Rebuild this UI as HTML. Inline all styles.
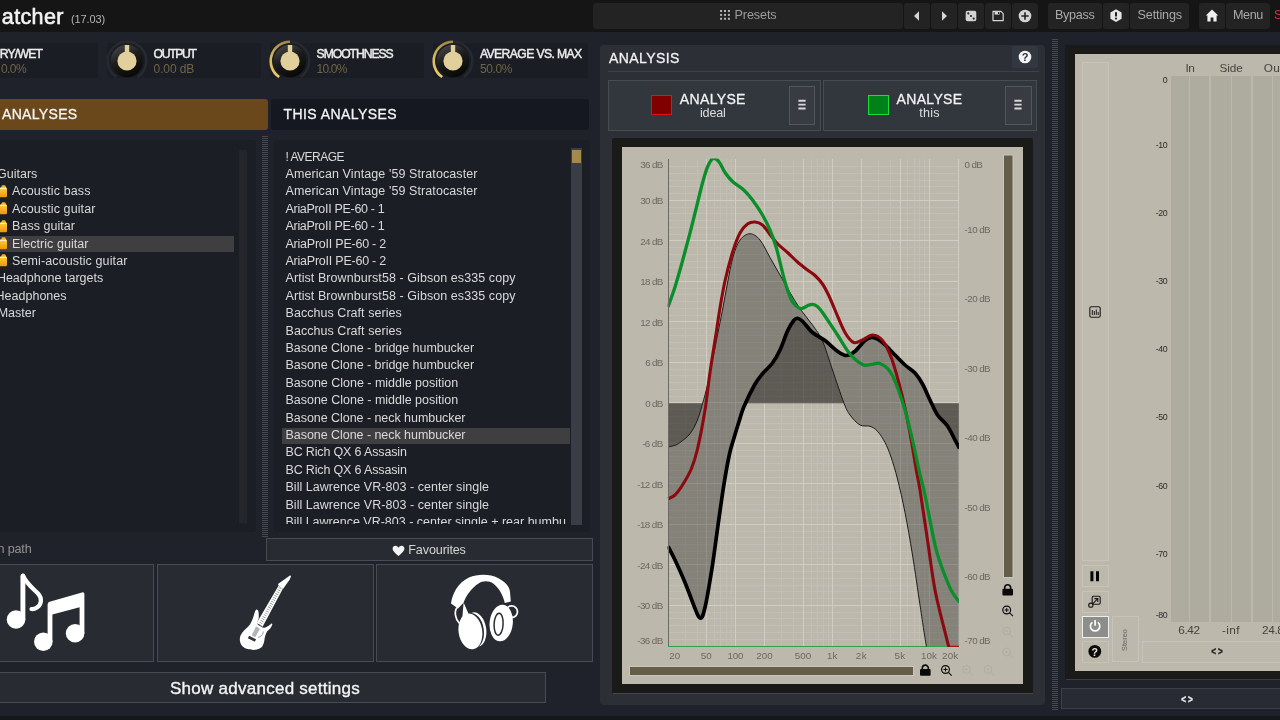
<!DOCTYPE html>
<html lang="en"><head><meta charset="utf-8"><title>MMatcher</title>
<style>
html,body{margin:0;padding:0;background:#1f222a;}
body{font-family:"Liberation Sans", sans-serif;}
#root{will-change:transform;position:relative;width:1280px;height:720px;overflow:hidden;background:#1f222a;}
#root div,#root span.t,#root svg{position:absolute;}
.t{white-space:pre;display:block;}
.b{box-sizing:border-box;}
</style></head><body><div id="root">
<div style="left:0;top:0;width:1280px;height:32px;background:#151515"></div><span class="t" style="left:1.80px;top:2.70px;font-size:21.5px;line-height:28px;color:#f4f4f4;letter-spacing:0.372px;-webkit-text-stroke:0.6px #f4f4f4;">atcher</span><span class="t" style="left:71.00px;top:12.00px;font-size:11px;line-height:14px;color:#b4b4b4;letter-spacing:-0.123px;">(17.03)</span><div style="left:593px;top:3px;width:309.5px;height:26px;background:#232323;border-radius:3px"></div><svg style="left:719.6px;top:10.2px" width="11" height="11" viewBox="0 0 11 11"><rect x="0.1" y="0" width="2" height="2" fill="#b4b4b4"/><rect x="4" y="0" width="2" height="2" fill="#b4b4b4"/><rect x="7.9" y="0" width="2" height="2" fill="#b4b4b4"/><rect x="0.1" y="3.9" width="2" height="2" fill="#b4b4b4"/><rect x="4" y="3.9" width="2" height="2" fill="#b4b4b4"/><rect x="7.9" y="3.9" width="2" height="2" fill="#b4b4b4"/><rect x="0.1" y="7.8" width="2" height="2" fill="#b4b4b4"/><rect x="4" y="7.8" width="2" height="2" fill="#b4b4b4"/><rect x="7.9" y="7.8" width="2" height="2" fill="#b4b4b4"/></svg><span class="t" style="left:734.50px;top:7.00px;font-size:12.6px;line-height:16px;color:#9c9c9c;letter-spacing:-0.100px;">Presets</span><div style="left:904px;top:3px;width:26px;height:26px;background:#232323;border-radius:3px"></div><div style="left:931px;top:3px;width:26px;height:26px;background:#232323;border-radius:3px"></div><div style="left:958px;top:3px;width:26px;height:26px;background:#232323;border-radius:3px"></div><div style="left:985px;top:3px;width:26px;height:26px;background:#232323;border-radius:3px"></div><div style="left:1012px;top:3px;width:26px;height:26px;background:#232323;border-radius:3px"></div><svg style="left:904px;top:3px" width="134" height="26" viewBox="0 0 134 26"><path d="M15 8.3 L10 13 L15 17.7 Z" fill="#d4d4d4"/><path d="M38 8.3 L43 13 L38 17.7 Z" fill="#d4d4d4"/><rect x="61.7" y="7.7" width="10.6" height="10.6" rx="2" fill="#d4d4d4"/><circle cx="64.3" cy="10.4" r="1.1" fill="#232323"/><circle cx="67" cy="13" r="1.1" fill="#232323"/><circle cx="69.7" cy="15.6" r="1.1" fill="#232323"/><path d="M89 8.4 H97 L99.2 10.6 V17.6 H89 Z" fill="none" stroke="#d4d4d4" stroke-width="1.2" stroke-linejoin="round"/><rect x="90.6" y="8.6" width="5" height="3" fill="#d4d4d4"/><rect x="94" y="9" width="1" height="2" fill="#232323"/><circle cx="121" cy="13" r="6.3" fill="#d4d4d4"/><path d="M117.3 13 H124.7 M121 9.3 V16.7" stroke="#232323" stroke-width="1.6"/></svg><div style="left:1048px;top:3px;width:54px;height:26px;background:#232323;border-radius:3px"></div><div style="left:1103px;top:3px;width:26px;height:26px;background:#232323;border-radius:3px"></div><div style="left:1130px;top:3px;width:59px;height:26px;background:#232323;border-radius:3px"></div><div style="left:1199px;top:3px;width:26px;height:26px;background:#232323;border-radius:3px"></div><div style="left:1226px;top:3px;width:43.5px;height:26px;background:#232323;border-radius:3px"></div><span class="t" style="left:1055.00px;top:7.00px;font-size:12.6px;line-height:16px;color:#a9a9a9;letter-spacing:-0.302px;">Bypass</span><span class="t" style="left:1137.50px;top:7.00px;font-size:12.6px;line-height:16px;color:#a9a9a9;letter-spacing:-0.127px;">Settings</span><span class="t" style="left:1233.00px;top:7.00px;font-size:12.6px;line-height:16px;color:#a9a9a9;letter-spacing:-0.379px;">Menu</span><span class="t" style="left:1274.00px;top:7.00px;font-size:12.6px;line-height:16px;color:#c23a3a;">S</span><svg style="left:1103px;top:3px" width="26" height="26" viewBox="0 0 26 26"><path d="M13 6.2 L18.6 9.4 V15.8 L13 19 L7.4 15.8 V9.4 Z" fill="#e6e6e6"/><rect x="12" y="9" width="2" height="4.6" rx="0.6" fill="#232323"/><circle cx="13" cy="15.6" r="1.1" fill="#232323"/></svg><svg style="left:1199px;top:3px" width="26" height="26" viewBox="0 0 26 26"><path d="M13 6.6 L19.2 12.6 H17.6 V18.4 H14.4 V14.4 H11.6 V18.4 H8.4 V12.6 H6.8 Z" fill="#efefef"/></svg><div style="left:-56px;top:42.5px;width:153.5px;height:35px;background:#1b1d24;border-radius:2px"></div><span class="t" style="left:-0.30px;top:45.60px;font-size:12.2px;line-height:16px;color:#ececec;letter-spacing:-0.781px;-webkit-text-stroke:0.45px #ececec;">RY/WET</span><span class="t" style="left:1.00px;top:60.60px;font-size:12px;line-height:16px;color:#6f6446;letter-spacing:-0.590px;">0.0%</span><div style="left:107px;top:42.5px;width:154px;height:35px;background:#1b1d24;border-radius:2px"></div><svg style="left:103.8px;top:38.4px" width="46" height="46" viewBox="-23 -23 46 46"><defs><linearGradient id="kg126" x1="0.2" y1="0" x2="0.7" y2="1"><stop offset="0" stop-color="#484848"/><stop offset="0.45" stop-color="#1c1c1c"/><stop offset="1" stop-color="#070707"/></linearGradient></defs><path d="M-10.79 16.00 A19.3 19.3 0 1 1 10.79 16.00" fill="none" stroke="#272a32" stroke-width="2.4"/><circle r="16.2" fill="url(#kg126)"/><rect x="-2.2" y="-16" width="4.4" height="12" fill="#e1d09c"/><circle r="9.6" fill="#e1d09c"/></svg><span class="t" style="left:153.60px;top:45.60px;font-size:12.2px;line-height:16px;color:#ececec;letter-spacing:-1.352px;-webkit-text-stroke:0.45px #ececec;">OUTPUT</span><span class="t" style="left:153.60px;top:60.60px;font-size:12px;line-height:16px;color:#6f6446;letter-spacing:-0.125px;">0.00 dB</span><div style="left:270px;top:42.5px;width:154px;height:35px;background:#1b1d24;border-radius:2px"></div><svg style="left:266.8px;top:38.4px" width="46" height="46" viewBox="-23 -23 46 46"><defs><linearGradient id="kg289" x1="0.2" y1="0" x2="0.7" y2="1"><stop offset="0" stop-color="#484848"/><stop offset="0.45" stop-color="#1c1c1c"/><stop offset="1" stop-color="#070707"/></linearGradient></defs><path d="M-10.79 16.00 A19.3 19.3 0 1 1 10.79 16.00" fill="none" stroke="#272a32" stroke-width="2.4"/><defs><linearGradient id="ag289" x1="0" y1="1" x2="0" y2="0"><stop offset="0" stop-color="#ebcd6c"/><stop offset="0.6" stop-color="#d6b75d"/><stop offset="1" stop-color="#a08848"/></linearGradient></defs><path d="M-10.79 16.00 A19.3 19.3 0 0 1 0.00 -19.30" fill="none" stroke="url(#ag289)" stroke-width="2.6"/><circle r="16.2" fill="url(#kg289)"/><rect x="-2.2" y="-16" width="4.4" height="12" fill="#e1d09c"/><circle r="9.6" fill="#e1d09c"/></svg><span class="t" style="left:316.60px;top:45.60px;font-size:12.2px;line-height:16px;color:#ececec;letter-spacing:-1.069px;-webkit-text-stroke:0.45px #ececec;">SMOOTHNESS</span><span class="t" style="left:316.60px;top:60.60px;font-size:12px;line-height:16px;color:#6f6446;letter-spacing:-0.806px;">10.0%</span><div style="left:433px;top:42.5px;width:155px;height:35px;background:#1b1d24;border-radius:2px"></div><svg style="left:430.4px;top:38.4px" width="46" height="46" viewBox="-23 -23 46 46"><defs><linearGradient id="kg453" x1="0.2" y1="0" x2="0.7" y2="1"><stop offset="0" stop-color="#484848"/><stop offset="0.45" stop-color="#1c1c1c"/><stop offset="1" stop-color="#070707"/></linearGradient></defs><path d="M-10.79 16.00 A19.3 19.3 0 1 1 10.79 16.00" fill="none" stroke="#272a32" stroke-width="2.4"/><defs><linearGradient id="ag453" x1="0" y1="1" x2="0" y2="0"><stop offset="0" stop-color="#ebcd6c"/><stop offset="0.6" stop-color="#d6b75d"/><stop offset="1" stop-color="#a08848"/></linearGradient></defs><path d="M-10.79 16.00 A19.3 19.3 0 0 1 0.00 -19.30" fill="none" stroke="url(#ag453)" stroke-width="2.6"/><circle r="16.2" fill="url(#kg453)"/><rect x="-2.2" y="-16" width="4.4" height="12" fill="#e1d09c"/><circle r="9.6" fill="#e1d09c"/></svg><span class="t" style="left:480.00px;top:45.60px;font-size:12.2px;line-height:16px;color:#ececec;letter-spacing:-0.624px;-webkit-text-stroke:0.45px #ececec;">AVERAGE VS. MAX</span><span class="t" style="left:480.00px;top:60.60px;font-size:12px;line-height:16px;color:#6f6446;letter-spacing:-0.406px;">50.0%</span><div style="left:-10px;top:98.5px;width:278px;height:31px;background:#6a481c;border-radius:3px"></div><span class="t" style="left:2.00px;top:104.60px;font-size:14px;line-height:18px;color:#f4f4f4;letter-spacing:0.326px;-webkit-text-stroke:0.3px #f4f4f4;">ANALYSES</span><div style="left:271px;top:99px;width:317.5px;height:30.5px;background:#151820;border-radius:3px"></div><span class="t" style="left:283.50px;top:104.60px;font-size:14px;line-height:18px;color:#f4f4f4;letter-spacing:0.430px;-webkit-text-stroke:0.3px #f4f4f4;">THIS ANALYSES</span><div style="left:-10px;top:140px;width:266px;height:392px;background:#1b1e25;border-radius:4px"></div><div style="left:273px;top:140px;width:317px;height:392px;background:#1b1e25;border-radius:4px"></div><div style="left:262px;top:136px;width:6px;height:401px;background:repeating-linear-gradient(to bottom,#464a53 0,#464a53 1px,#1d2026 1px,#1d2026 2px)"></div><div style="left:239px;top:150px;width:8px;height:373px;background:#24262b"></div><div style="left:571px;top:148px;width:11px;height:377px;background:#3a3d46"></div><div style="left:572px;top:149.5px;width:9px;height:13px;background:#a38a4c"></div><div style="left:-5px;top:236px;width:239px;height:15.5px;background:#3f3f42"></div><div style="left:282px;top:428px;width:288px;height:15.5px;background:#3f3f42"></div><span class="t" style="left:-3.00px;top:165.90px;font-size:12.5px;line-height:16px;color:#d9d9d9;">Guitars</span><span class="t" style="left:12.00px;top:183.30px;font-size:12.5px;line-height:16px;color:#d9d9d9;letter-spacing:0.106px;">Acoustic bass</span><svg style="left:-6.1px;top:184.7px" width="13" height="13" viewBox="0 0 13 13"><defs><linearGradient id="fg2" x1="0" y1="0" x2="0" y2="1"><stop offset="0" stop-color="#ffcf3f"/><stop offset="1" stop-color="#ef930c"/></linearGradient></defs><path d="M7 2.9 L7.6 0.9 Q7.8 0.2 8.6 0.2 H10.6 Q11.4 0.2 11.6 0.9 L12.2 2.9 Z" fill="#f5b324"/><rect x="0" y="2.6" width="13" height="9.7" rx="1.3" fill="url(#fg2)"/><path d="M0.6 3.4 H12.4" stroke="#fff6d8" stroke-width="0.9"/></svg><span class="t" style="left:12.00px;top:200.70px;font-size:12.5px;line-height:16px;color:#d9d9d9;letter-spacing:0.101px;">Acoustic guitar</span><svg style="left:-6.1px;top:202.1px" width="13" height="13" viewBox="0 0 13 13"><defs><linearGradient id="fg3" x1="0" y1="0" x2="0" y2="1"><stop offset="0" stop-color="#ffcf3f"/><stop offset="1" stop-color="#ef930c"/></linearGradient></defs><path d="M7 2.9 L7.6 0.9 Q7.8 0.2 8.6 0.2 H10.6 Q11.4 0.2 11.6 0.9 L12.2 2.9 Z" fill="#f5b324"/><rect x="0" y="2.6" width="13" height="9.7" rx="1.3" fill="url(#fg3)"/><path d="M0.6 3.4 H12.4" stroke="#fff6d8" stroke-width="0.9"/></svg><span class="t" style="left:12.00px;top:218.10px;font-size:12.5px;line-height:16px;color:#d9d9d9;letter-spacing:0.043px;">Bass guitar</span><svg style="left:-6.1px;top:219.5px" width="13" height="13" viewBox="0 0 13 13"><defs><linearGradient id="fg4" x1="0" y1="0" x2="0" y2="1"><stop offset="0" stop-color="#ffcf3f"/><stop offset="1" stop-color="#ef930c"/></linearGradient></defs><path d="M7 2.9 L7.6 0.9 Q7.8 0.2 8.6 0.2 H10.6 Q11.4 0.2 11.6 0.9 L12.2 2.9 Z" fill="#f5b324"/><rect x="0" y="2.6" width="13" height="9.7" rx="1.3" fill="url(#fg4)"/><path d="M0.6 3.4 H12.4" stroke="#fff6d8" stroke-width="0.9"/></svg><span class="t" style="left:12.00px;top:235.50px;font-size:12.5px;line-height:16px;color:#d9d9d9;letter-spacing:0.051px;">Electric guitar</span><svg style="left:-6.1px;top:236.9px" width="13" height="13" viewBox="0 0 13 13"><defs><linearGradient id="fg5" x1="0" y1="0" x2="0" y2="1"><stop offset="0" stop-color="#ffcf3f"/><stop offset="1" stop-color="#ef930c"/></linearGradient></defs><path d="M7 2.9 L7.6 0.9 Q7.8 0.2 8.6 0.2 H10.6 Q11.4 0.2 11.6 0.9 L12.2 2.9 Z" fill="#f5b324"/><rect x="0" y="2.6" width="13" height="9.7" rx="1.3" fill="url(#fg5)"/><path d="M0.6 3.4 H12.4" stroke="#fff6d8" stroke-width="0.9"/></svg><span class="t" style="left:12.00px;top:252.90px;font-size:12.5px;line-height:16px;color:#d9d9d9;letter-spacing:0.113px;">Semi-acoustic guitar</span><svg style="left:-6.1px;top:254.3px" width="13" height="13" viewBox="0 0 13 13"><defs><linearGradient id="fg6" x1="0" y1="0" x2="0" y2="1"><stop offset="0" stop-color="#ffcf3f"/><stop offset="1" stop-color="#ef930c"/></linearGradient></defs><path d="M7 2.9 L7.6 0.9 Q7.8 0.2 8.6 0.2 H10.6 Q11.4 0.2 11.6 0.9 L12.2 2.9 Z" fill="#f5b324"/><rect x="0" y="2.6" width="13" height="9.7" rx="1.3" fill="url(#fg6)"/><path d="M0.6 3.4 H12.4" stroke="#fff6d8" stroke-width="0.9"/></svg><span class="t" style="left:-3.14px;top:270.30px;font-size:12.5px;line-height:16px;color:#d9d9d9;">Headphone targets</span><span class="t" style="left:-4.41px;top:287.70px;font-size:12.5px;line-height:16px;color:#d9d9d9;">Headphones</span><span class="t" style="left:-2.30px;top:305.10px;font-size:12.5px;line-height:16px;color:#d9d9d9;">Master</span><div style="left:273px;top:140px;width:297px;height:384.2px;overflow:hidden"><span class="t" style="left:12.50px;top:8.50px;font-size:12px;line-height:16px;color:#d9d9d9;letter-spacing:-0.516px;">! AVERAGE</span><span class="t" style="left:12.50px;top:25.90px;font-size:12.5px;line-height:16px;color:#d9d9d9;letter-spacing:0.089px;">American Vintage '59 Stratocaster</span><span class="t" style="left:12.50px;top:43.30px;font-size:12.5px;line-height:16px;color:#d9d9d9;letter-spacing:0.089px;">American Vintage '59 Stratocaster</span><span class="t" style="left:12.50px;top:60.70px;font-size:12.5px;line-height:16px;color:#d9d9d9;letter-spacing:-0.311px;">AriaProII PE-60 - 1</span><span class="t" style="left:12.50px;top:78.10px;font-size:12.5px;line-height:16px;color:#d9d9d9;letter-spacing:-0.311px;">AriaProII PE-60 - 1</span><span class="t" style="left:12.50px;top:95.50px;font-size:12.5px;line-height:16px;color:#d9d9d9;letter-spacing:-0.232px;">AriaProII PE-60 - 2</span><span class="t" style="left:12.50px;top:112.90px;font-size:12.5px;line-height:16px;color:#d9d9d9;letter-spacing:-0.232px;">AriaProII PE-60 - 2</span><span class="t" style="left:12.50px;top:130.30px;font-size:12.5px;line-height:16px;color:#d9d9d9;letter-spacing:0.072px;">Artist Brownburst58 - Gibson es335 copy</span><span class="t" style="left:12.50px;top:147.70px;font-size:12.5px;line-height:16px;color:#d9d9d9;letter-spacing:0.072px;">Artist Brownburst58 - Gibson es335 copy</span><span class="t" style="left:12.50px;top:165.10px;font-size:12.5px;line-height:16px;color:#d9d9d9;letter-spacing:0.049px;">Bacchus Craft series</span><span class="t" style="left:12.50px;top:182.50px;font-size:12.5px;line-height:16px;color:#d9d9d9;letter-spacing:0.049px;">Bacchus Craft series</span><span class="t" style="left:12.50px;top:199.90px;font-size:12.5px;line-height:16px;color:#d9d9d9;letter-spacing:-0.036px;">Basone Clone - bridge humbucker</span><span class="t" style="left:12.50px;top:217.30px;font-size:12.5px;line-height:16px;color:#d9d9d9;letter-spacing:-0.036px;">Basone Clone - bridge humbucker</span><span class="t" style="left:12.50px;top:234.70px;font-size:12.5px;line-height:16px;color:#d9d9d9;letter-spacing:-0.014px;">Basone Clone - middle position</span><span class="t" style="left:12.50px;top:252.10px;font-size:12.5px;line-height:16px;color:#d9d9d9;letter-spacing:-0.014px;">Basone Clone - middle position</span><span class="t" style="left:12.50px;top:269.50px;font-size:12.5px;line-height:16px;color:#d9d9d9;letter-spacing:-0.047px;">Basone Clone - neck humbucker</span><span class="t" style="left:12.50px;top:286.90px;font-size:12.5px;line-height:16px;color:#d9d9d9;letter-spacing:-0.047px;">Basone Clone - neck humbucker</span><span class="t" style="left:12.50px;top:304.30px;font-size:12.5px;line-height:16px;color:#d9d9d9;letter-spacing:-0.158px;">BC Rich QX 6 Assasin</span><span class="t" style="left:12.50px;top:321.70px;font-size:12.5px;line-height:16px;color:#d9d9d9;letter-spacing:-0.158px;">BC Rich QX 6 Assasin</span><span class="t" style="left:12.50px;top:339.10px;font-size:12.5px;line-height:16px;color:#d9d9d9;letter-spacing:0.036px;">Bill Lawrence VR-803 - center single</span><span class="t" style="left:12.50px;top:356.50px;font-size:12.5px;line-height:16px;color:#d9d9d9;letter-spacing:0.036px;">Bill Lawrence VR-803 - center single</span><span class="t" style="left:12.50px;top:373.90px;font-size:12.5px;line-height:16px;color:#d9d9d9;">Bill Lawrence VR-803 - center single + rear humbu</span></div><span class="t" style="left:-2.50px;top:541.40px;font-size:12.6px;line-height:16px;color:#929292;letter-spacing:-0.169px;">n path</span><div class="b" style="left:266px;top:538px;width:327px;height:23px;background:#282b32;border:1px solid #484b52"></div><svg style="left:391.5px;top:544.5px" width="13" height="12" viewBox="0 0 13 12"><path d="M6.5 11 C2 7.4 0.6 5.6 0.6 3.6 C0.6 1.8 1.9 0.7 3.4 0.7 C4.8 0.7 5.9 1.5 6.5 2.8 C7.1 1.5 8.2 0.7 9.6 0.7 C11.1 0.7 12.4 1.8 12.4 3.6 C12.4 5.6 11 7.4 6.5 11 Z" fill="#f4f4f4"/></svg><span class="t" style="left:408.30px;top:542.00px;font-size:12.6px;line-height:16px;color:#d4d4d4;letter-spacing:-0.130px;">Favourites</span><div class="b" style="left:-10px;top:564px;width:164px;height:98px;background:#282b32;border:1px solid #484b52"></div><div class="b" style="left:157px;top:564px;width:216.5px;height:98px;background:#282b32;border:1px solid #484b52"></div><div class="b" style="left:376px;top:564px;width:217px;height:98px;background:#282b32;border:1px solid #484b52"></div><svg style="left:0;top:564px" width="154" height="98" viewBox="0 564 154 98"><ellipse cx="16" cy="619.5" rx="9.3" ry="9.2" fill="#ffffff"/><path d="M22.9 619.5 V576.2" stroke="#ffffff" stroke-width="4.9" stroke-linecap="round" fill="none"/><path d="M23 575.6 C26 583 33 588.5 38 593.5 C42.5 598.5 41.5 604.5 37 607.5 C35 608.8 33 609.2 31.5 609" stroke="#ffffff" stroke-width="4.2" stroke-linecap="round" fill="none"/><ellipse cx="43.3" cy="641.8" rx="9.3" ry="9.2" fill="#ffffff"/><ellipse cx="75.1" cy="633.2" rx="9.3" ry="9.2" fill="#ffffff"/><path d="M47.6 641.8 V604.5 Q47.6 602.4 49.6 601.8 L82 592.4 Q84.4 591.8 84.4 594.2 V633.2 H79.6 V607.3 L52.4 614.4 V641.8 Z" fill="#ffffff"/></svg><svg style="left:225px;top:566px" width="80" height="94" viewBox="225 566 80 94"><path d="M256.72 609.47 C257.20 609.65 258.09 609.97 258.42 611.43 C258.75 612.89 258.88 616.22 258.68 618.22 C258.49 620.22 256.94 622.09 257.25 623.44 C257.55 624.79 259.36 625.60 260.51 626.31 C261.66 627.03 262.79 627.86 264.16 627.75 C265.54 627.64 267.52 626.38 268.73 625.66 C269.95 624.94 270.89 623.59 271.48 623.44 C272.06 623.29 272.48 623.92 272.26 624.75 C272.04 625.57 271.04 627.27 270.17 628.40 C269.30 629.53 267.89 630.19 267.04 631.54 C266.19 632.88 265.62 634.58 265.08 636.50 C264.53 638.41 264.43 641.17 263.77 643.02 C263.12 644.87 262.58 646.46 261.16 647.59 C259.75 648.72 257.57 649.57 255.29 649.81 C253.00 650.05 249.67 649.72 247.45 649.03 C245.23 648.33 243.23 647.07 241.97 645.63 C240.71 644.20 240.10 642.15 239.88 640.41 C239.66 638.67 239.88 636.93 240.67 635.19 C241.45 633.45 243.06 631.71 244.58 629.97 C246.11 628.23 248.46 626.60 249.80 624.75 C251.15 622.90 251.89 620.83 252.68 618.87 C253.46 616.91 254.03 614.41 254.50 613.00 C254.98 611.58 255.18 610.97 255.55 610.39 C255.92 609.80 256.24 609.30 256.72 609.47 Z" fill="#ffffff"/><path d="M256.72 623.05 L262.60 626.84 L282.70 588.98 L278.52 585.84 Z" fill="#ffffff"/><path d="M259.8 625.2 L280.6 587.3" stroke="#5d5f66" stroke-width="3.3" stroke-dasharray="0.5 1.7" fill="none"/><path d="M278.00 584.02 L290.27 575.14 L290.93 576.44 L289.75 579.58 L282.96 588.98 L278.79 586.10 Z" fill="#ffffff"/><path d="M256.07 626.31 L259.99 628.66 L255.29 637.15 L251.63 635.19 Z" fill="#b4b5b9"/><path d="M249.15 635.84 L256.07 639.37 L254.77 641.72 L247.85 638.19 Z" fill="#33353b"/><path d="M263.4 631.5 C263 635 260.5 637 258 637.3" stroke="#5d5f66" stroke-width="0.6" fill="none"/></svg><svg style="left:440px;top:566px" width="90" height="94" viewBox="440 566 90 94"><path d="M451 603.6 C452 594 458 582.5 469 577.5 C478 573.8 490 574 498 578 C505 581.8 509.5 586 510 592 L510.8 601.5 L504.8 603 C503 595 499 588 493.5 583.8 C489 580.6 483 580.6 478.5 583.4 C471.5 588 466 595.5 463.5 602.8 L458 608.5 Z" fill="#ffffff"/><path d="M457.2 607.5 C454 611 455 619 459.5 623.5" stroke="#ffffff" stroke-width="1.7" fill="none"/><path d="M463.6 602.5 L470 617 L462 622 Z" fill="#ffffff"/><ellipse cx="475.6" cy="629.5" rx="10.6" ry="17.3" transform="rotate(-9 475.6 629.5)" fill="#ffffff"/><ellipse cx="472.6" cy="630.4" rx="11.2" ry="17.6" transform="rotate(-9 472.6 630.4)" fill="#2a2d34"/><ellipse cx="470.4" cy="631.4" rx="11.8" ry="18" transform="rotate(-9 470.4 631.4)" fill="#ffffff"/><circle cx="511.6" cy="611.8" r="5.9" fill="none" stroke="#ffffff" stroke-width="1.8"/><ellipse cx="501.2" cy="623" rx="11.6" ry="18.4" transform="rotate(6 501.2 623)" fill="#ffffff"/><ellipse cx="498.6" cy="624.2" rx="4.5" ry="11" transform="rotate(3 498.6 624.2)" fill="none" stroke="#2a2d34" stroke-width="1.5"/></svg><div class="b" style="left:-10px;top:672px;width:555.5px;height:30.5px;background:#282b32;border:1px solid #484b52"></div><span class="t" style="left:170.00px;top:677.60px;font-size:17px;line-height:22px;color:#f4f4f4;letter-spacing:0.259px;-webkit-text-stroke:0.35px #f4f4f4;">Show advanced settings</span><div style="left:0;top:715.5px;width:1280px;height:5px;background:#15171b"></div><div style="left:600px;top:45px;width:445px;height:660px;background:#2c2f36;border-radius:4px"></div><span class="t" style="left:609.00px;top:49.20px;font-size:14px;line-height:18px;color:#f2f2f2;letter-spacing:0.420px;-webkit-text-stroke:0.3px #f2f2f2;">ANALYSIS</span><div style="left:608px;top:71px;width:431px;height:1px;background:#3d4149"></div><div style="left:1012px;top:46px;width:26px;height:21.5px;background:#33373f;border-radius:2px"></div><svg style="left:1018px;top:50px" width="14" height="14" viewBox="0 0 14 14"><circle cx="7" cy="7" r="6.3" fill="#f4f4f4"/></svg><span class="t" style="left:1021.63px;top:50.20px;font-size:11px;line-height:14px;color:#2b2f37;font-weight:bold;">?</span><div class="b" style="left:607.5px;top:80px;width:213px;height:50.5px;background:#32363d;border:1px solid #474b53"></div><div class="b" style="left:651px;top:94.7px;width:20.8px;height:20.8px;background:#800000;border:1px solid #e01414"></div><span class="t" style="left:679.80px;top:89.60px;font-size:14px;line-height:18px;color:#f2f2f2;letter-spacing:0.350px;-webkit-text-stroke:0.3px #f2f2f2;">ANALYSE</span><span class="t" style="left:699.95px;top:105.30px;font-size:12.6px;line-height:16px;color:#dedede;letter-spacing:-0.182px;">ideal</span><div class="b" style="left:788.5px;top:86px;width:26.5px;height:38.5px;background:#383b42;border:1px solid #53565d"></div><svg style="left:797.9px;top:98.9px" width="9" height="11" viewBox="0 0 9 11"><path d="M0.4 1.7 H7.6 M0.4 5.6 H7.6 M0.4 9.5 H7.6" stroke="#d8d8d8" stroke-width="1.9"/></svg><div class="b" style="left:823px;top:80px;width:214px;height:50.5px;background:#32363d;border:1px solid #474b53"></div><div class="b" style="left:867.8px;top:94.7px;width:20.8px;height:20.8px;background:#008018;border:1px solid #14e03c"></div><span class="t" style="left:896.50px;top:89.60px;font-size:14px;line-height:18px;color:#f2f2f2;letter-spacing:0.350px;-webkit-text-stroke:0.3px #f2f2f2;">ANALYSE</span><span class="t" style="left:919.25px;top:105.30px;font-size:12.6px;line-height:16px;color:#dedede;letter-spacing:0.223px;">this</span><div class="b" style="left:1005px;top:86px;width:26.5px;height:38.5px;background:#383b42;border:1px solid #53565d"></div><svg style="left:1014.4px;top:98.9px" width="9" height="11" viewBox="0 0 9 11"><path d="M0.4 1.7 H7.6 M0.4 5.6 H7.6 M0.4 9.5 H7.6" stroke="#d8d8d8" stroke-width="1.9"/></svg><div style="left:612px;top:138px;width:420.5px;height:555.5px;background:#1a1a19;border-radius:2px"></div><div style="left:613px;top:693.2px;width:419.5px;height:1px;background:#44474e"></div><div style="left:622px;top:147px;width:401px;height:537px;background:#bdb8ac"></div><svg style="left:600px;top:130px" width="460" height="580" viewBox="600 130 460 580"><defs><clipPath id="pc"><rect x="667.5" y="158.6" width="291.4" height="488.5"/></clipPath></defs><path d="M668 639.50 H958.7M668 632.50 H958.7M668 625.50 H958.7M668 618.50 H958.7M668 612.50 H958.7M668 598.50 H958.7M668 591.50 H958.7M668 585.50 H958.7M668 578.50 H958.7M668 571.50 H958.7M668 558.50 H958.7M668 551.50 H958.7M668 544.50 H958.7M668 537.50 H958.7M668 531.50 H958.7M668 517.50 H958.7M668 510.50 H958.7M668 504.50 H958.7M668 497.50 H958.7M668 490.50 H958.7M668 477.50 H958.7M668 470.50 H958.7M668 463.50 H958.7M668 456.50 H958.7M668 450.50 H958.7M668 436.50 H958.7M668 429.50 H958.7M668 423.50 H958.7M668 416.50 H958.7M668 409.50 H958.7M668 396.50 H958.7M668 389.50 H958.7M668 382.50 H958.7M668 375.50 H958.7M668 369.50 H958.7M668 355.50 H958.7M668 348.50 H958.7M668 342.50 H958.7M668 335.50 H958.7M668 328.50 H958.7M668 315.50 H958.7M668 308.50 H958.7M668 301.50 H958.7M668 294.50 H958.7M668 288.50 H958.7M668 274.50 H958.7M668 267.50 H958.7M668 261.50 H958.7M668 254.50 H958.7M668 247.50 H958.7M668 234.50 H958.7M668 227.50 H958.7M668 220.50 H958.7M668 213.50 H958.7M668 207.50 H958.7M668 193.50 H958.7M668 186.50 H958.7M668 180.50 H958.7M668 173.50 H958.7M668 166.50 H958.7M685.5 159 V646M697.5 159 V646M714.5 159 V646M720.5 159 V646M726.5 159 V646M731.5 159 V646M781.5 159 V646M793.5 159 V646M811.5 159 V646M817.5 159 V646M823.5 159 V646M828.5 159 V646M878.5 159 V646M890.5 159 V646M907.5 159 V646M914.5 159 V646M919.5 159 V646M924.5 159 V646" stroke="#c3bfb4" stroke-width="1" fill="none"/><path d="M668 605.50 H958.7M668 564.50 H958.7M668 524.50 H958.7M668 483.50 H958.7M668 443.50 H958.7M668 402.50 H958.7M668 362.50 H958.7M668 321.50 H958.7M668 281.50 H958.7M668 240.50 H958.7M668 200.50 H958.7M668.5 159 V646M706.5 159 V646M735.5 159 V646M764.5 159 V646M803.5 159 V646M832.5 159 V646M861.5 159 V646M900.5 159 V646M929.5 159 V646M958.5 159 V646" stroke="#d0cdc3" stroke-width="1" fill="none"/><g clip-path="url(#pc)"><path d="M668.00 447.00 C669.17 446.72 673.00 446.05 675.00 445.30 C677.00 444.55 677.50 444.43 680.00 442.50 C682.50 440.57 687.08 437.50 690.00 433.75 C692.92 430.00 695.42 425.00 697.50 420.00 C699.58 415.00 700.83 409.58 702.50 403.75 C704.17 397.92 705.83 392.29 707.50 385.00 C709.17 377.71 710.83 368.33 712.50 360.00 C714.17 351.67 715.83 343.33 717.50 335.00 C719.17 326.67 720.83 318.67 722.50 310.00 C724.17 301.33 725.75 291.83 727.50 283.00 C729.25 274.17 730.92 264.17 733.00 257.00 C735.08 249.83 737.17 243.88 740.00 240.00 C742.83 236.12 746.67 233.75 750.00 233.75 C753.33 233.75 756.67 236.04 760.00 240.00 C763.33 243.96 766.67 251.67 770.00 257.50 C773.33 263.33 776.67 269.17 780.00 275.00 C783.33 280.83 786.67 286.88 790.00 292.50 C793.33 298.12 796.25 303.33 800.00 308.75 C803.75 314.17 808.75 319.62 812.50 325.00 C816.25 330.38 819.17 333.50 822.50 341.00 C825.83 348.50 828.96 359.75 832.50 370.00 C836.04 380.25 840.83 395.00 843.75 402.50 C846.67 410.00 847.29 411.25 850.00 415.00 C852.71 418.75 856.67 423.12 860.00 425.00 C863.33 426.88 867.08 425.21 870.00 426.25 C872.92 427.29 875.00 428.54 877.50 431.25 C880.00 433.96 882.75 438.21 885.00 442.50 C887.25 446.79 888.92 450.92 891.00 457.00 C893.08 463.08 895.17 469.75 897.50 479.00 C899.83 488.25 902.50 499.83 905.00 512.50 C907.50 525.17 910.00 539.58 912.50 555.00 C915.00 570.42 918.12 592.50 920.00 605.00 C921.88 617.50 922.68 623.08 923.75 630.00 C924.82 636.92 925.96 643.75 926.40 646.50 L926.4 700 L960 700 L960 403.30 L668 403.30 Z" fill="rgba(0,0,0,0.295)" fill-rule="evenodd"/><path d="M668.00 546.25 C669.17 548.54 672.17 553.96 675.00 560.00 C677.83 566.04 681.67 574.42 685.00 582.50 C688.33 590.58 692.83 603.00 695.00 608.50 C697.17 614.00 697.12 613.88 698.00 615.50 C698.88 617.12 699.53 618.12 700.30 618.20 C701.07 618.28 701.82 617.78 702.60 616.00 C703.38 614.22 704.18 611.00 705.00 607.50 C705.82 604.00 706.25 602.08 707.50 595.00 C708.75 587.92 710.62 577.50 712.50 565.00 C714.38 552.50 716.83 533.50 718.75 520.00 C720.67 506.50 722.21 495.00 724.00 484.00 C725.79 473.00 727.83 461.67 729.50 454.00 C731.17 446.33 732.33 443.67 734.00 438.00 C735.67 432.33 737.83 425.25 739.50 420.00 C741.17 414.75 741.50 412.33 744.00 406.50 C746.50 400.67 751.42 390.46 754.50 385.00 C757.58 379.54 759.50 377.42 762.50 373.75 C765.50 370.08 769.58 366.96 772.50 363.00 C775.42 359.04 777.50 355.33 780.00 350.00 C782.50 344.67 785.21 335.92 787.50 331.00 C789.79 326.08 792.08 322.62 793.75 320.50 C795.42 318.38 796.04 318.12 797.50 318.25 C798.96 318.38 800.00 318.88 802.50 321.25 C805.00 323.62 808.75 329.29 812.50 332.50 C816.25 335.71 820.83 337.38 825.00 340.50 C829.17 343.62 833.96 348.75 837.50 351.25 C841.04 353.75 843.33 355.50 846.25 355.50 C849.17 355.50 851.88 353.75 855.00 351.25 C858.12 348.75 862.08 342.79 865.00 340.50 C867.92 338.21 869.58 337.17 872.50 337.50 C875.42 337.83 878.75 339.58 882.50 342.50 C886.25 345.42 891.25 351.25 895.00 355.00 C898.75 358.75 901.67 362.00 905.00 365.00 C908.33 368.00 912.08 369.83 915.00 373.00 C917.92 376.17 920.00 379.50 922.50 384.00 C925.00 388.50 927.50 394.83 930.00 400.00 C932.50 405.17 934.58 410.67 937.50 415.00 C940.42 419.33 944.58 421.83 947.50 426.00 C950.42 430.17 953.00 436.25 955.00 440.00 C957.00 443.75 958.75 447.08 959.50 448.50 L959.50 403.30 L668.00 403.30 Z" fill="rgba(0,0,0,0.295)" fill-rule="evenodd"/><path d="M668 646.5 H949" stroke="#2f9f4b" stroke-width="1.1" fill="none"/><path d="M947.5 646.4 H960" stroke="#a0141a" stroke-width="1.3" fill="none"/><path d="M668.00 447.00 C669.17 446.72 673.00 446.05 675.00 445.30 C677.00 444.55 677.50 444.43 680.00 442.50 C682.50 440.57 687.08 437.50 690.00 433.75 C692.92 430.00 695.42 425.00 697.50 420.00 C699.58 415.00 700.83 409.58 702.50 403.75 C704.17 397.92 705.83 392.29 707.50 385.00 C709.17 377.71 710.83 368.33 712.50 360.00 C714.17 351.67 715.83 343.33 717.50 335.00 C719.17 326.67 720.83 318.67 722.50 310.00 C724.17 301.33 725.75 291.83 727.50 283.00 C729.25 274.17 730.92 264.17 733.00 257.00 C735.08 249.83 737.17 243.88 740.00 240.00 C742.83 236.12 746.67 233.75 750.00 233.75 C753.33 233.75 756.67 236.04 760.00 240.00 C763.33 243.96 766.67 251.67 770.00 257.50 C773.33 263.33 776.67 269.17 780.00 275.00 C783.33 280.83 786.67 286.88 790.00 292.50 C793.33 298.12 796.25 303.33 800.00 308.75 C803.75 314.17 808.75 319.62 812.50 325.00 C816.25 330.38 819.17 333.50 822.50 341.00 C825.83 348.50 828.96 359.75 832.50 370.00 C836.04 380.25 840.83 395.00 843.75 402.50 C846.67 410.00 847.29 411.25 850.00 415.00 C852.71 418.75 856.67 423.12 860.00 425.00 C863.33 426.88 867.08 425.21 870.00 426.25 C872.92 427.29 875.00 428.54 877.50 431.25 C880.00 433.96 882.75 438.21 885.00 442.50 C887.25 446.79 888.92 450.92 891.00 457.00 C893.08 463.08 895.17 469.75 897.50 479.00 C899.83 488.25 902.50 499.83 905.00 512.50 C907.50 525.17 910.00 539.58 912.50 555.00 C915.00 570.42 918.12 592.50 920.00 605.00 C921.88 617.50 922.68 623.08 923.75 630.00 C924.82 636.92 925.96 643.75 926.40 646.50" fill="none" stroke="#1c1c1c" stroke-width="1"/><path d="M668.00 546.25 C669.17 548.54 672.17 553.96 675.00 560.00 C677.83 566.04 681.67 574.42 685.00 582.50 C688.33 590.58 692.83 603.00 695.00 608.50 C697.17 614.00 697.12 613.88 698.00 615.50 C698.88 617.12 699.53 618.12 700.30 618.20 C701.07 618.28 701.82 617.78 702.60 616.00 C703.38 614.22 704.18 611.00 705.00 607.50 C705.82 604.00 706.25 602.08 707.50 595.00 C708.75 587.92 710.62 577.50 712.50 565.00 C714.38 552.50 716.83 533.50 718.75 520.00 C720.67 506.50 722.21 495.00 724.00 484.00 C725.79 473.00 727.83 461.67 729.50 454.00 C731.17 446.33 732.33 443.67 734.00 438.00 C735.67 432.33 737.83 425.25 739.50 420.00 C741.17 414.75 741.50 412.33 744.00 406.50 C746.50 400.67 751.42 390.46 754.50 385.00 C757.58 379.54 759.50 377.42 762.50 373.75 C765.50 370.08 769.58 366.96 772.50 363.00 C775.42 359.04 777.50 355.33 780.00 350.00 C782.50 344.67 785.21 335.92 787.50 331.00 C789.79 326.08 792.08 322.62 793.75 320.50 C795.42 318.38 796.04 318.12 797.50 318.25 C798.96 318.38 800.00 318.88 802.50 321.25 C805.00 323.62 808.75 329.29 812.50 332.50 C816.25 335.71 820.83 337.38 825.00 340.50 C829.17 343.62 833.96 348.75 837.50 351.25 C841.04 353.75 843.33 355.50 846.25 355.50 C849.17 355.50 851.88 353.75 855.00 351.25 C858.12 348.75 862.08 342.79 865.00 340.50 C867.92 338.21 869.58 337.17 872.50 337.50 C875.42 337.83 878.75 339.58 882.50 342.50 C886.25 345.42 891.25 351.25 895.00 355.00 C898.75 358.75 901.67 362.00 905.00 365.00 C908.33 368.00 912.08 369.83 915.00 373.00 C917.92 376.17 920.00 379.50 922.50 384.00 C925.00 388.50 927.50 394.83 930.00 400.00 C932.50 405.17 934.58 410.67 937.50 415.00 C940.42 419.33 944.58 421.83 947.50 426.00 C950.42 430.17 953.00 436.25 955.00 440.00 C957.00 443.75 958.75 447.08 959.50 448.50" fill="none" stroke="#000" stroke-width="3.7" stroke-linejoin="round"/><path d="M668.00 498.75 C669.17 498.12 672.58 497.29 675.00 495.00 C677.42 492.71 679.79 489.33 682.50 485.00 C685.21 480.67 688.75 475.00 691.25 469.00 C693.75 463.00 695.21 458.83 697.50 449.00 C699.79 439.17 702.92 422.75 705.00 410.00 C707.08 397.25 708.12 385.42 710.00 372.50 C711.88 359.58 714.58 343.25 716.25 332.50 C717.92 321.75 718.54 316.58 720.00 308.00 C721.46 299.42 722.92 290.25 725.00 281.00 C727.08 271.75 730.00 260.50 732.50 252.50 C735.00 244.50 737.50 237.75 740.00 233.00 C742.50 228.25 745.00 225.83 747.50 224.00 C750.00 222.17 752.50 221.83 755.00 222.00 C757.50 222.17 760.00 222.92 762.50 225.00 C765.00 227.08 767.50 231.38 770.00 234.50 C772.50 237.62 774.58 240.75 777.50 243.75 C780.42 246.75 784.17 249.46 787.50 252.50 C790.83 255.54 794.17 259.08 797.50 262.00 C800.83 264.92 804.58 267.75 807.50 270.00 C810.42 272.25 812.50 273.17 815.00 275.50 C817.50 277.83 820.21 280.67 822.50 284.00 C824.79 287.33 826.67 291.17 828.75 295.50 C830.83 299.83 832.29 303.83 835.00 310.00 C837.71 316.17 841.88 327.08 845.00 332.50 C848.12 337.92 850.83 341.25 853.75 342.50 C856.67 343.75 859.38 341.25 862.50 340.00 C865.62 338.75 869.17 334.92 872.50 335.00 C875.83 335.08 879.38 336.75 882.50 340.50 C885.62 344.25 888.54 350.50 891.25 357.50 C893.96 364.50 896.46 374.08 898.75 382.50 C901.04 390.92 902.92 398.42 905.00 408.00 C907.08 417.58 909.38 429.67 911.25 440.00 C913.12 450.33 914.79 461.67 916.25 470.00 C917.71 478.33 918.12 478.33 920.00 490.00 C921.88 501.67 925.00 523.33 927.50 540.00 C930.00 556.67 932.08 574.67 935.00 590.00 C937.92 605.33 942.77 622.75 945.00 632.00 C947.23 641.25 947.63 642.33 948.40 645.50 C949.17 648.67 949.40 650.08 949.60 651.00" fill="none" stroke="#8b0a0f" stroke-width="3.1" stroke-linejoin="round"/><path d="M668.00 307.00 C669.17 303.67 672.58 294.67 675.00 287.00 C677.42 279.33 680.00 270.00 682.50 261.00 C685.00 252.00 687.50 242.67 690.00 233.00 C692.50 223.33 695.42 211.33 697.50 203.00 C699.58 194.67 700.83 189.00 702.50 183.00 C704.17 177.00 705.75 171.08 707.50 167.00 C709.25 162.92 711.12 159.42 713.00 158.50 C714.88 157.58 716.75 159.17 718.75 161.50 C720.75 163.83 722.71 169.17 725.00 172.50 C727.29 175.83 729.38 178.58 732.50 181.50 C735.62 184.42 740.42 186.92 743.75 190.00 C747.08 193.08 749.38 195.83 752.50 200.00 C755.62 204.17 759.58 210.00 762.50 215.00 C765.42 220.00 767.71 224.58 770.00 230.00 C772.29 235.42 774.38 241.25 776.25 247.50 C778.12 253.75 779.58 261.08 781.25 267.50 C782.92 273.92 784.38 280.25 786.25 286.00 C788.12 291.75 790.21 298.25 792.50 302.00 C794.79 305.75 798.08 307.57 800.00 308.50 C801.92 309.43 802.58 308.13 804.00 307.60 C805.42 307.07 807.08 305.83 808.50 305.30 C809.92 304.77 811.08 304.25 812.50 304.40 C813.92 304.55 815.33 304.85 817.00 306.20 C818.67 307.55 819.08 307.70 822.50 312.50 C825.92 317.30 832.92 328.08 837.50 335.00 C842.08 341.92 845.83 349.08 850.00 354.00 C854.17 358.92 859.00 362.75 862.50 364.50 C866.00 366.25 868.08 364.67 871.00 364.50 C873.92 364.33 876.83 362.33 880.00 363.50 C883.17 364.67 887.08 367.50 890.00 371.50 C892.92 375.50 895.00 381.08 897.50 387.50 C900.00 393.92 902.50 401.25 905.00 410.00 C907.50 418.75 910.17 430.00 912.50 440.00 C914.83 450.00 916.92 460.83 919.00 470.00 C921.08 479.17 922.33 482.50 925.00 495.00 C927.67 507.50 932.33 533.33 935.00 545.00 C937.67 556.67 939.05 559.17 941.00 565.00 C942.95 570.83 944.98 575.75 946.70 580.00 C948.42 584.25 949.77 587.57 951.30 590.50 C952.83 593.43 954.45 595.60 955.90 597.60 C957.35 599.60 959.32 601.68 960.00 602.50" fill="none" stroke="#0a8e2a" stroke-width="3.3" stroke-linejoin="round"/></g><path d="M668.5 159 V646" stroke="#6b6a65" stroke-width="1"/><rect x="629.5" y="666.5" width="284" height="9" fill="#645d49" stroke="#cac6bb" stroke-width="1"/><rect x="1003.5" y="155" width="9.5" height="422.5" fill="#645d49" stroke="#cac6bb" stroke-width="1"/><rect x="920" y="669.1" width="10.6" height="6.6" rx="1" fill="#0a0a0a"/><path d="M922.3 669.5 V668.1 A3 3 0 0 1 928.3 668.1 V669.5" fill="none" stroke="#0a0a0a" stroke-width="1.6"/><circle cx="945.5" cy="669.5" r="3.9" fill="none" stroke="#0a0a0a" stroke-width="1.2"/><path d="M948.4 672.4 L951.7 675.7" stroke="#0a0a0a" stroke-width="1.1"/><path d="M943.5 669.5 H947.5" stroke="#0a0a0a" stroke-width="1"/><path d="M945.5 667.5 V671.5" stroke="#0a0a0a" stroke-width="1"/><circle cx="966.5" cy="669.5" r="3.9" fill="none" stroke="#b1ac9f" stroke-width="1"/><path d="M969.4 672.4 L972.7 675.7" stroke="#b1ac9f" stroke-width="0.9"/><path d="M964.5 669.5 H968.5" stroke="#b1ac9f" stroke-width="1"/><circle cx="988" cy="669.5" r="3.9" fill="none" stroke="#b1ac9f" stroke-width="1"/><path d="M990.9 672.4 L994.2 675.7" stroke="#b1ac9f" stroke-width="0.9"/><circle cx="988" cy="669.5" r="1" fill="#b1ac9f"/><rect x="1002.4" y="588.8" width="10.6" height="6.6" rx="1" fill="#0a0a0a"/><path d="M1004.7 589.2 V587.8 A3 3 0 0 1 1010.7 587.8 V589.2" fill="none" stroke="#0a0a0a" stroke-width="1.6"/><circle cx="1006.7" cy="610" r="3.9" fill="none" stroke="#0a0a0a" stroke-width="1.2"/><path d="M1009.6 612.9 L1012.9 616.2" stroke="#0a0a0a" stroke-width="1.1"/><path d="M1004.7 610 H1008.7" stroke="#0a0a0a" stroke-width="1"/><path d="M1006.7 608 V612" stroke="#0a0a0a" stroke-width="1"/><circle cx="1006.7" cy="631" r="3.9" fill="none" stroke="#b1ac9f" stroke-width="1"/><path d="M1009.6 633.9 L1012.9 637.2" stroke="#b1ac9f" stroke-width="0.9"/><path d="M1004.7 631 H1008.7" stroke="#b1ac9f" stroke-width="1"/><circle cx="1006.7" cy="652" r="3.9" fill="none" stroke="#b1ac9f" stroke-width="1"/><path d="M1009.6 654.9 L1012.9 658.2" stroke="#b1ac9f" stroke-width="0.9"/><circle cx="1006.7" cy="652" r="1" fill="#b1ac9f"/></svg><span class="t" style="left:640.20px;top:157.80px;font-size:9.8px;line-height:13px;color:#6b6861;letter-spacing:-0.622px;">36 dB</span><span class="t" style="left:640.20px;top:194.30px;font-size:9.8px;line-height:13px;color:#6b6861;letter-spacing:-0.622px;">30 dB</span><span class="t" style="left:640.20px;top:234.80px;font-size:9.8px;line-height:13px;color:#6b6861;letter-spacing:-0.622px;">24 dB</span><span class="t" style="left:640.20px;top:275.30px;font-size:9.8px;line-height:13px;color:#6b6861;letter-spacing:-0.622px;">18 dB</span><span class="t" style="left:640.20px;top:315.80px;font-size:9.8px;line-height:13px;color:#6b6861;letter-spacing:-0.622px;">12 dB</span><span class="t" style="left:645.20px;top:356.30px;font-size:9.8px;line-height:13px;color:#6b6861;letter-spacing:-0.664px;">6 dB</span><span class="t" style="left:645.20px;top:396.80px;font-size:9.8px;line-height:13px;color:#6b6861;letter-spacing:-0.664px;">0 dB</span><span class="t" style="left:642.20px;top:437.30px;font-size:9.8px;line-height:13px;color:#6b6861;letter-spacing:-0.584px;">-6 dB</span><span class="t" style="left:637.20px;top:477.80px;font-size:9.8px;line-height:13px;color:#6b6861;letter-spacing:-0.562px;">-12 dB</span><span class="t" style="left:637.20px;top:518.30px;font-size:9.8px;line-height:13px;color:#6b6861;letter-spacing:-0.562px;">-18 dB</span><span class="t" style="left:637.20px;top:558.80px;font-size:9.8px;line-height:13px;color:#6b6861;letter-spacing:-0.562px;">-24 dB</span><span class="t" style="left:637.20px;top:599.30px;font-size:9.8px;line-height:13px;color:#6b6861;letter-spacing:-0.562px;">-30 dB</span><span class="t" style="left:637.20px;top:634.10px;font-size:9.8px;line-height:13px;color:#6b6861;letter-spacing:-0.562px;">-36 dB</span><span class="t" style="left:964.60px;top:157.80px;font-size:9.8px;line-height:13px;color:#6b6861;letter-spacing:-0.664px;">0 dB</span><span class="t" style="left:964.60px;top:222.80px;font-size:9.8px;line-height:13px;color:#6b6861;letter-spacing:-0.562px;">-10 dB</span><span class="t" style="left:964.60px;top:292.30px;font-size:9.8px;line-height:13px;color:#6b6861;letter-spacing:-0.562px;">-20 dB</span><span class="t" style="left:964.60px;top:361.80px;font-size:9.8px;line-height:13px;color:#6b6861;letter-spacing:-0.562px;">-30 dB</span><span class="t" style="left:964.60px;top:431.30px;font-size:9.8px;line-height:13px;color:#6b6861;letter-spacing:-0.562px;">-40 dB</span><span class="t" style="left:964.60px;top:500.80px;font-size:9.8px;line-height:13px;color:#6b6861;letter-spacing:-0.562px;">-50 dB</span><span class="t" style="left:964.60px;top:570.30px;font-size:9.8px;line-height:13px;color:#6b6861;letter-spacing:-0.562px;">-60 dB</span><span class="t" style="left:964.60px;top:634.10px;font-size:9.8px;line-height:13px;color:#6b6861;letter-spacing:-0.562px;">-70 dB</span><span class="t" style="left:669.30px;top:648.80px;font-size:9.8px;line-height:13px;color:#6b6861;letter-spacing:-0.053px;">20</span><span class="t" style="left:700.83px;top:648.80px;font-size:9.8px;line-height:13px;color:#6b6861;letter-spacing:-0.053px;">50</span><span class="t" style="left:727.38px;top:648.80px;font-size:9.8px;line-height:13px;color:#6b6861;letter-spacing:-0.120px;">100</span><span class="t" style="left:756.28px;top:648.80px;font-size:9.8px;line-height:13px;color:#6b6861;letter-spacing:0.047px;">200</span><span class="t" style="left:794.81px;top:648.80px;font-size:9.8px;line-height:13px;color:#6b6861;letter-spacing:0.047px;">500</span><span class="t" style="left:826.96px;top:648.80px;font-size:9.8px;line-height:13px;color:#6b6861;letter-spacing:0.070px;">1k</span><span class="t" style="left:855.86px;top:648.80px;font-size:9.8px;line-height:13px;color:#6b6861;letter-spacing:0.320px;">2k</span><span class="t" style="left:894.39px;top:648.80px;font-size:9.8px;line-height:13px;color:#6b6861;letter-spacing:0.320px;">5k</span><span class="t" style="left:921.04px;top:648.80px;font-size:9.8px;line-height:13px;color:#6b6861;letter-spacing:0.068px;">10k</span><span class="t" style="left:942.00px;top:648.80px;font-size:9.8px;line-height:13px;color:#6b6861;letter-spacing:0.234px;">20k</span><div style="left:1052px;top:39px;width:6px;height:672px;background:repeating-linear-gradient(to bottom,#464a53 0,#464a53 1px,#1d2026 1px,#1d2026 2px)"></div><div style="left:1065px;top:45px;width:230px;height:634.5px;background:#1a1a19;border-radius:2px"></div><div style="left:1066px;top:679.3px;width:230px;height:1px;background:#3a3d44"></div><div style="left:1075px;top:54px;width:220px;height:616.5px;background:#bdb8ac"></div><div class="b" style="left:1082px;top:62px;width:27px;height:499px;background:#c0bbaf;border:1px solid #c7c3b8"></div><svg style="left:1088.5px;top:306px" width="12" height="12" viewBox="0 0 12 12"><rect x="0.8" y="0.8" width="10.4" height="10.4" rx="1.5" fill="none" stroke="#1c1c1c" stroke-width="1.1"/><path d="M3.3 4 V9 M5.3 5 V9 M7.3 3.5 V9 M9.2 6 V9" stroke="#1c1c1c" stroke-width="1"/></svg><div class="b" style="left:1082px;top:565px;width:27px;height:22px;background:#bdb8ac;border:1px solid #c7c3b8"></div><div class="b" style="left:1082px;top:590.5px;width:27px;height:22px;background:#bdb8ac;border:1px solid #c7c3b8"></div><div class="b" style="left:1082px;top:615.5px;width:27px;height:22px;background:#8d8d8c;border:1px solid #efefef"></div><div class="b" style="left:1082px;top:641px;width:27px;height:21.5px;background:#bdb8ac;border:1px solid #c7c3b8"></div><svg style="left:1082px;top:565px" width="27" height="98" viewBox="0 0 27 98"><path d="M9.9 6.2 V16.2 M15.5 6.2 V16.2" stroke="#050505" stroke-width="3"/><rect x="10.2" y="31.2" width="8" height="8" rx="1.2" fill="none" stroke="#161616" stroke-width="1.1"/><path d="M12.4 33.6 H15.8 V37" fill="none" stroke="#161616" stroke-width="1.1"/><path d="M15.8 33.6 L9.6 39.8" stroke="#161616" stroke-width="1.1"/><circle cx="8.8" cy="40.2" r="2.1" fill="#bdb8ac" stroke="#161616" stroke-width="1.1"/><path d="M10.4 57.4 A4.7 4.7 0 1 0 15.8 57.4" fill="none" stroke="#fafafa" stroke-width="1.7"/><path d="M13.1 55 V60.8" stroke="#fafafa" stroke-width="1.7"/><circle cx="12.8" cy="86.4" r="6.4" fill="#0a0a0a"/></svg><span class="t" style="left:1091.59px;top:644.60px;font-size:10.5px;line-height:14px;color:#e8e4d8;font-weight:bold;">?</span><div class="b" style="left:1112px;top:616.2px;width:26.7px;height:46.3px;background:#bdb8ac;border:1px solid #c7c3b8"></div><span class="t" style="left:1114.41px;top:634.50px;font-size:7.4px;line-height:10px;color:#67645d;transform:rotate(-90deg);">Stereo</span><div class="b" style="left:1142px;top:640.5px;width:160px;height:22px;background:#bdb8ac;border:1px solid #c7c3b8"></div><span class="t" style="left:1208.90px;top:644.30px;font-size:11px;line-height:14px;color:#1e1e1e;font-weight:bold;letter-spacing:2.570px;transform:scaleX(0.75);-webkit-text-stroke:0.4px #1e1e1e;">&lt;&gt;</span><div style="left:1171px;top:76.2px;width:17.8px;height:546px;background:#aeab9f"></div><div style="left:1190px;top:76.2px;width:19.2px;height:546px;background:#aeab9f"></div><div style="left:1211px;top:76.2px;width:19.5px;height:546px;background:#aeab9f"></div><div style="left:1232px;top:76.2px;width:19px;height:546px;background:#aeab9f"></div><div style="left:1252.8px;top:76.2px;width:19.2px;height:546px;background:#aeab9f"></div><div style="left:1273.2px;top:76.2px;width:16.8px;height:546px;background:#aeab9f"></div><span class="t" style="left:1185.40px;top:60.90px;font-size:11.8px;line-height:15px;color:#45443f;letter-spacing:-0.422px;">In</span><span class="t" style="left:1219.60px;top:60.90px;font-size:11.8px;line-height:15px;color:#45443f;letter-spacing:-0.156px;">Side</span><span class="t" style="left:1263.80px;top:60.90px;font-size:11.8px;line-height:15px;color:#45443f;letter-spacing:0.161px;">Out</span><span class="t" style="left:1162.70px;top:75.30px;font-size:8.8px;line-height:11px;color:#2b2b29;letter-spacing:-0.306px;">0</span><span class="t" style="left:1155.70px;top:139.50px;font-size:8.8px;line-height:11px;color:#2b2b29;letter-spacing:-0.373px;">-10</span><span class="t" style="left:1155.70px;top:207.70px;font-size:8.8px;line-height:11px;color:#2b2b29;letter-spacing:-0.373px;">-20</span><span class="t" style="left:1155.70px;top:275.90px;font-size:8.8px;line-height:11px;color:#2b2b29;letter-spacing:-0.373px;">-30</span><span class="t" style="left:1155.70px;top:344.10px;font-size:8.8px;line-height:11px;color:#2b2b29;letter-spacing:-0.373px;">-40</span><span class="t" style="left:1155.70px;top:412.30px;font-size:8.8px;line-height:11px;color:#2b2b29;letter-spacing:-0.373px;">-50</span><span class="t" style="left:1155.70px;top:480.50px;font-size:8.8px;line-height:11px;color:#2b2b29;letter-spacing:-0.373px;">-60</span><span class="t" style="left:1155.70px;top:548.70px;font-size:8.8px;line-height:11px;color:#2b2b29;letter-spacing:-0.373px;">-70</span><span class="t" style="left:1155.70px;top:610.40px;font-size:8.8px;line-height:11px;color:#2b2b29;letter-spacing:-0.373px;">-80</span><span class="t" style="left:1178.25px;top:623.30px;font-size:11.8px;line-height:15px;color:#45443f;letter-spacing:-0.367px;">6.42</span><span class="t" style="left:1222.00px;top:623.30px;font-size:11.8px;line-height:15px;color:#45443f;letter-spacing:0.402px;">-inf</span><span class="t" style="left:1262.00px;top:623.30px;font-size:11.8px;line-height:15px;color:#45443f;letter-spacing:-0.367px;">24.8</span><div class="b" style="left:1060.5px;top:687.5px;width:240px;height:21.5px;background:#282b33;border:1px solid #3c4048"></div><span class="t" style="left:1178.50px;top:691.60px;font-size:11px;line-height:14px;color:#ededed;font-weight:bold;letter-spacing:2.570px;transform:scaleX(0.75);-webkit-text-stroke:0.4px #ededed;">&lt;&gt;</span>
</div></body></html>
